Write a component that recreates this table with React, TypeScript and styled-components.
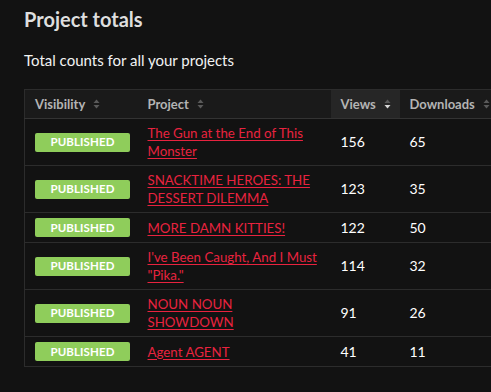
import React from "react";
import styled, { createGlobalStyle } from "styled-components";

const GlobalStyle = createGlobalStyle`
  html, body {
    margin: 0;
    padding: 0;
    background: #121212;
    overflow: hidden;
  }
  body {
    font-family: Lato, "Noto Sans", sans-serif;
    color: #eeeeee;
  }
`;

const Page = styled.div`
  width: 491px;
  height: 392px;
  padding: 7px 0 0 24px;
  box-sizing: border-box;
  background: #121212;
  overflow: hidden;
`;

const Title = styled.h2`
  margin: 0;
  font-size: 20px;
  line-height: 24px;
  font-weight: 700;
  color: #dedede;
`;

const Subtitle = styled.p`
  margin: 19px 0 19px;
  font-size: 15px;
  line-height: 20px;
  color: #f2f2f2;
`;

const Table = styled.table`
  border-collapse: collapse;
  table-layout: fixed;
  width: 485px;
  border: 1px solid #2c2c2c;
  font-size: 14px;
`;

const HeadCell = styled.th<{ $sorted?: boolean }>`
  height: 28px;
  padding: 0 10px;
  text-align: left;
  font-size: 13px;
  font-weight: 700;
  color: #b4b4b4;
  background: ${(p) => (p.$sorted ? "#262626" : "#1a1a1a")};
  border-bottom: 1px solid #333333;
  white-space: nowrap;
`;

const HeadInner = styled.span`
  display: inline-flex;
  align-items: center;
  gap: 8px;
`;

const Row = styled.tr`
  border-top: 1px solid #2c2c2c;
`;

const Cell = styled.td`
  padding: 5px 10px;
  line-height: 18px;
  vertical-align: middle;
  color: #ffffff;
`;

const Badge = styled.span`
  display: flex;
  align-items: center;
  justify-content: center;
  width: 95px;
  height: 19px;
  border-radius: 2px;
  background: #8fcd5b;
  color: #ffffff;
  font-size: 11.5px;
  font-weight: 700;
  letter-spacing: 0.1px;
`;

const ProjectLink = styled.a`
  color: #e8233f;
  font-size: 13.3px;
  text-decoration: underline;
  text-underline-offset: 2px;
`;

const SortIcon = ({ active }: { active?: boolean }) => (
  <svg width="7" height="10" viewBox="0 0 7 10">
    <path d="M3.5 0.5 L6.5 4 L0.5 4 Z" fill="#5a5a5a" />
    <path d="M3.5 9.5 L6.5 6 L0.5 6 Z" fill={active ? "#d8d8d8" : "#5a5a5a"} />
  </svg>
);

const rows = [
  { title: "The Gun at the End of This Monster", views: 156, downloads: 65 },
  { title: "SNACKTIME HEROES: THE DESSERT DILEMMA", views: 123, downloads: 35 },
  { title: "MORE DAMN KITTIES!", views: 122, downloads: 50 },
  { title: 'I\'ve Been Caught, And I Must "Pika."', views: 114, downloads: 32 },
  { title: "NOUN NOUN SHOWDOWN", views: 91, downloads: 26 },
  { title: "Agent AGENT", views: 41, downloads: 11 },
];

export default function App() {
  return (
    <>
      <GlobalStyle />
      <Page>
        <Title>Project totals</Title>
        <Subtitle>Total counts for all your projects</Subtitle>
        <Table>
          <colgroup>
            <col style={{ width: 113 }} />
            <col style={{ width: 193 }} />
            <col style={{ width: 69 }} />
            <col style={{ width: 110 }} />
          </colgroup>
          <thead>
            <tr>
              <HeadCell>
                <HeadInner>Visibility <SortIcon /></HeadInner>
              </HeadCell>
              <HeadCell>
                <HeadInner>Project <SortIcon /></HeadInner>
              </HeadCell>
              <HeadCell $sorted>
                <HeadInner>Views <SortIcon active /></HeadInner>
              </HeadCell>
              <HeadCell>
                <HeadInner>Downloads <SortIcon /></HeadInner>
              </HeadCell>
            </tr>
          </thead>
          <tbody>
            {rows.map((r) => (
              <Row key={r.title}>
                <Cell>
                  <Badge>PUBLISHED</Badge>
                </Cell>
                <Cell>
                  <ProjectLink href="#">{r.title}</ProjectLink>
                </Cell>
                <Cell>{r.views}</Cell>
                <Cell>{r.downloads}</Cell>
              </Row>
            ))}
          </tbody>
        </Table>
      </Page>
    </>
  );
}
